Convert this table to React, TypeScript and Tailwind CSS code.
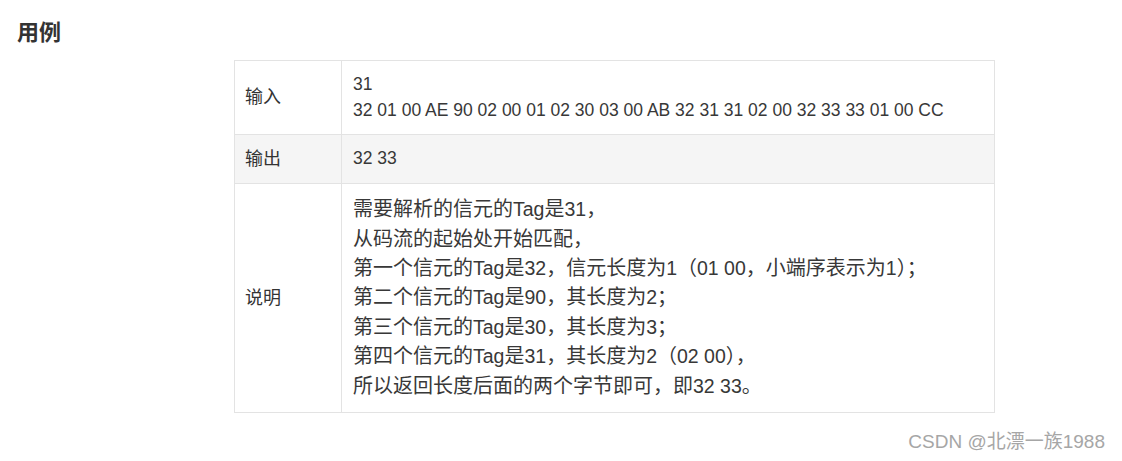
const CJK = /([\u3000-\u303f\u4e00-\u9fff\uff00-\uffef]+)/;

// wrap CJK runs so they can get their own size
function Mixed({ text, cjk }: { text: string; cjk: string }) {
  return (
    <>
      {text.split(CJK).map((part, i) =>
        CJK.test(part) ? (
          <span key={i} className={cjk}>
            {part}
          </span>
        ) : (
          part
        )
      )}
    </>
  );
}

const rows = [
  {
    label: "输入",
    lines: ["31", "32 01 00 AE 90 02 00 01 02 30 03 00 AB 32 31 31 02 00 32 33 33 01 00 CC"],
    size: "text-[17.5px]",
  },
  {
    label: "输出",
    lines: ["32 33"],
    size: "text-[17.5px]",
    shaded: true,
  },
  {
    label: "说明",
    lines: [
      "需要解析的信元的Tag是31，",
      "从码流的起始处开始匹配，",
      "第一个信元的Tag是32，信元长度为1（01 00，小端序表示为1）；",
      "第二个信元的Tag是90，其长度为2；",
      "第三个信元的Tag是30，其长度为3；",
      "第四个信元的Tag是31，其长度为2（02 00），",
      "所以返回长度后面的两个字节即可，即32 33。",
    ],
    size: "text-[19.5px]",
  },
];

export default function App() {
  return (
    <div
      className="min-h-screen bg-white text-[#333]"
      style={{ fontFamily: '"Liberation Sans", "Noto Sans CJK SC", sans-serif' }}
    >
      <h2 className="pl-[17px] pt-[18px] text-[22px] leading-[30px] font-bold text-[#333]">用例</h2>

      <table className="ml-[234px] mt-[12px] w-[761px] table-fixed border-collapse">
        <tbody>
          {rows.map((row) => (
            <tr key={row.label} className={row.shaded ? "bg-[#f5f5f5]" : "bg-white"}>
              <td className="w-[107px] border border-[#e3e3e3] px-[10px] align-middle text-[18px] text-[#333]">
                {row.label}
              </td>
              <td
                className={`border border-[#e3e3e3] px-[11px] py-[11px] align-middle leading-[1.47] text-[#383838] ${row.size}`}
              >
                {row.lines.map((line) => (
                  <div key={line}>
                    <Mixed text={line} cjk="text-[20px]" />
                  </div>
                ))}
              </td>
            </tr>
          ))}
        </tbody>
      </table>

      <div className="mt-[17px] flex justify-end pr-[17px] text-[19px] leading-[24px] text-[#a6a6a6]">
        CSDN @北漂一族1988
      </div>
    </div>
  );
}
